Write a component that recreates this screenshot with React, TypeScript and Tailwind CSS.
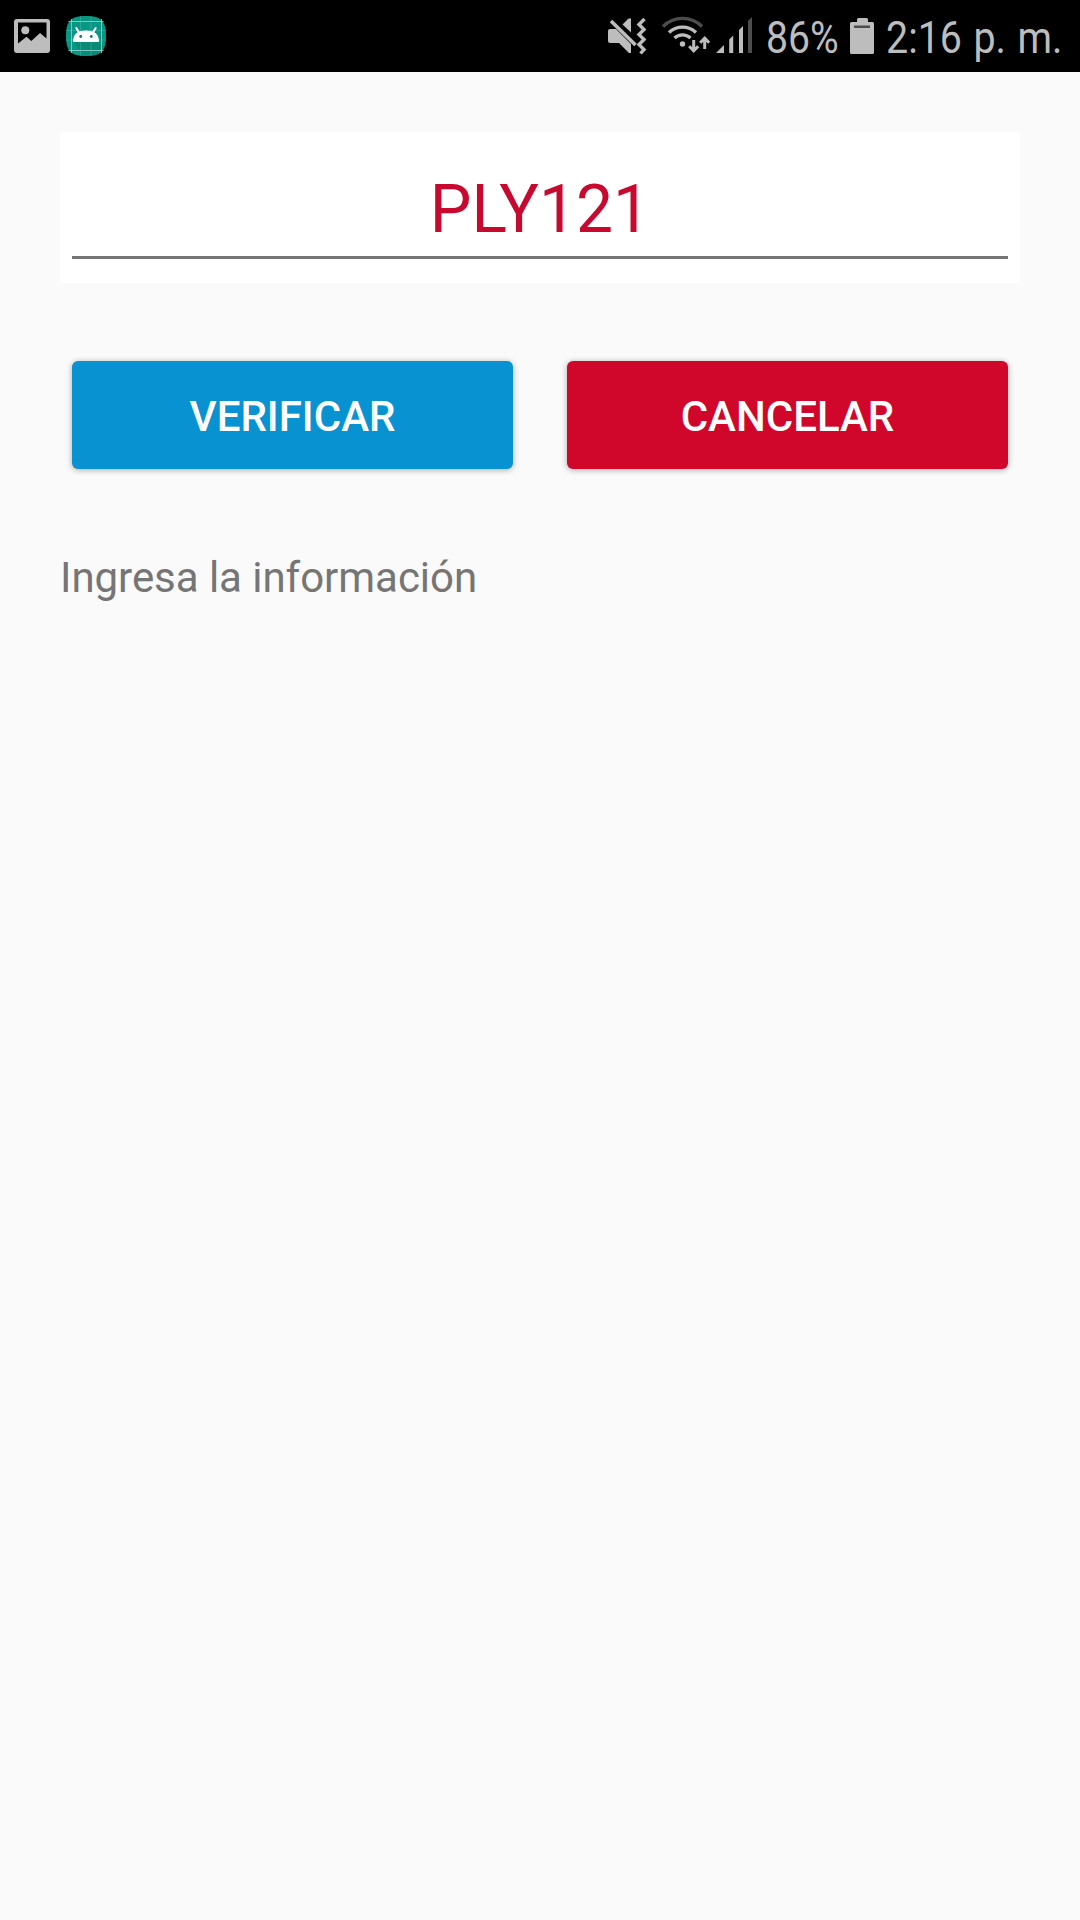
import React from 'react';

const GRAY = '#bdbdbd';

function NotificationIcons() {
  return (
    <svg width="120" height="72" viewBox="0 0 120 72" className="block shrink-0">
      <path
        fillRule="evenodd"
        fill={GRAY}
        d="M17 19h30a3 3 0 0 1 3 3v28a3 3 0 0 1-3 3H17a3 3 0 0 1-3-3V22a3 3 0 0 1 3-3ZM18 22.500V43.500l8.500-6.700 4.800 4.200 8.700-8 6.500 5.500V22.500Z"
      />
      <circle cx="25.300" cy="30.200" r="4" fill={GRAY} />
      <path
        fill="#0a9684"
        d="M86 16C101 16 106 21 106 36S101 56 86 56 66 51 66 36 71 16 86 16Z"
      />
      <path fill="#087f6c" d="M74 42h25l5 7q-4 7-18 7h-4Z" opacity=".5" />
      <path
        d="M80.500 16v40M91 16v40M66 30.500h40M66 40h40"
        stroke="#66c9b8"
        strokeWidth=".7"
        opacity=".45"
        fill="none"
      />
      <path
        d="M71.500 19v34M101.500 19v34M68.500 21.500h35M68.500 50.500h35"
        stroke="#7fd0c3"
        strokeWidth=".9"
        fill="none"
      />
      <path d="M73 42C73 34 77.500 30.500 86 30.500S99 34 99 42Z" fill="#fff" />
      <path
        d="m76.300 28 3 5M95.700 28l-3 5"
        stroke="#fff"
        strokeWidth="2"
        strokeLinecap="round"
      />
      <circle cx="80.700" cy="36.500" r="1.400" fill="#0a7a69" />
      <circle cx="91.300" cy="36.500" r="1.400" fill="#0a7a69" />
    </svg>
  );
}

function SystemIcons() {
  return (
    <svg width="170" height="72" viewBox="590 0 170 72" className="block shrink-0">
      <path d="M622.500 24.500 628.500 18.500H631V32.500Z" fill={GRAY} />
      <path
        d="M610 29h6l15 15v9h-2L619 43h-9a2 2 0 0 1-2-2V31a2 2 0 0 1 2-2Z"
        fill={GRAY}
      />
      <path d="m611 21 24.500 24" stroke={GRAY} strokeWidth="3.600" />
      <path
        d="m644.500 19-5.500 5.500 5 5-5 5 5 5-5 5 5 5-3.500 4"
        stroke={GRAY}
        strokeWidth="3.400"
        fill="none"
      />
      <g fill="none" strokeWidth="3.300">
        <path d="M663 26.500a27.500 27.500 0 0 1 39 0" stroke="#4d4d4d" />
        <path d="M669 32.500a19.500 19.500 0 0 1 27 0" stroke={GRAY} />
        <path d="M674.500 38a11.800 11.800 0 0 1 16 0" stroke={GRAY} />
      </g>
      <circle cx="682.500" cy="44" r="2.700" fill={GRAY} />
      <path
        d="M693.700 40v10M689.200 46.300l4.500 4.500 4.500-4.500M704.700 49V39M700.200 42.700l4.500-4.500 4.500 4.500"
        stroke={GRAY}
        strokeWidth="3"
        fill="none"
      />
      <path
        d="M716 53h8v-8ZM729.200 53v-13.500l4-4V53ZM739 53V30l4-4v27Z"
        fill={GRAY}
      />
      <path d="M748 53V21l4-4v36Z" fill="#4d4d4d" />
    </svg>
  );
}

function BatteryIcon() {
  return (
    <svg width="24" height="72" viewBox="850 0 24 72" className="block shrink-0">
      <path
        d="M857 22v-2.500q0-1.500 1.500-1.500h8q1.500 0 1.500 1.500V22h4.500q1.500 0 1.500 1.500v29q0 1.500-1.500 1.500h-21q-1.500 0-1.500-1.500v-29q0-1.500 1.500-1.500Z"
        fill={GRAY}
      />
      <path d="M854 25.500h16v2.500h-16z" fill="#4d4d4d" />
    </svg>
  );
}

function StatusBar() {
  return (
    <header className="flex h-[72px] bg-black text-[45px] leading-[75px] text-[#bdbdbd]">
      <NotificationIcons />
      <div className="ml-auto flex">
        <SystemIcons />
        <div className="ml-[6px] w-[84px] whitespace-nowrap">
          <span className="inline-block origin-left scale-x-[0.87]">86%</span>
        </div>
        <BatteryIcon />
        <div className="ml-[12px] w-[194px] whitespace-nowrap">
          <span className="inline-block origin-left scale-x-[0.875] [word-spacing:2px]">2:16 p. m.</span>
        </div>
      </div>
    </header>
  );
}

const buttonClass =
  'h-[108px] flex-1 rounded-[6px] pt-[3px] text-center text-[42px] leading-[105px] font-medium text-white shadow-[0_1px_6px_rgba(0,0,0,0.32)]';

export default function App() {
  return (
    <div
      className="h-[1920px] w-[1080px] overflow-hidden bg-[#fafafa]"
      style={{ fontFamily: 'Roboto, sans-serif' }}
    >
      <StatusBar />
      <main className="px-[60px] pt-[60px]">
        <div className="h-[151px] bg-white px-[12px] pt-[34px]">
          <div className="h-[93px] border-b-[3px] border-[#757575] bg-white">
            <input
              aria-label="Placa"
              defaultValue="PLY121"
              className="block h-[88px] w-full bg-transparent text-center text-[66px] leading-[88px] text-[#c8092f] outline-none"
            />
          </div>
        </div>
        <div className="mt-[78px] flex gap-[54px] px-[12px]">
          <button className={`${buttonClass} bg-[#0992d1]`}>VERIFICAR</button>
          <button className={`${buttonClass} bg-[#d0072b]`}>CANCELAR</button>
        </div>
        <p className="mt-[84px] text-[42px] leading-[50px] tracking-[-0.04px] text-[#757575]">
          Ingresa la información
        </p>
      </main>
    </div>
  );
}
